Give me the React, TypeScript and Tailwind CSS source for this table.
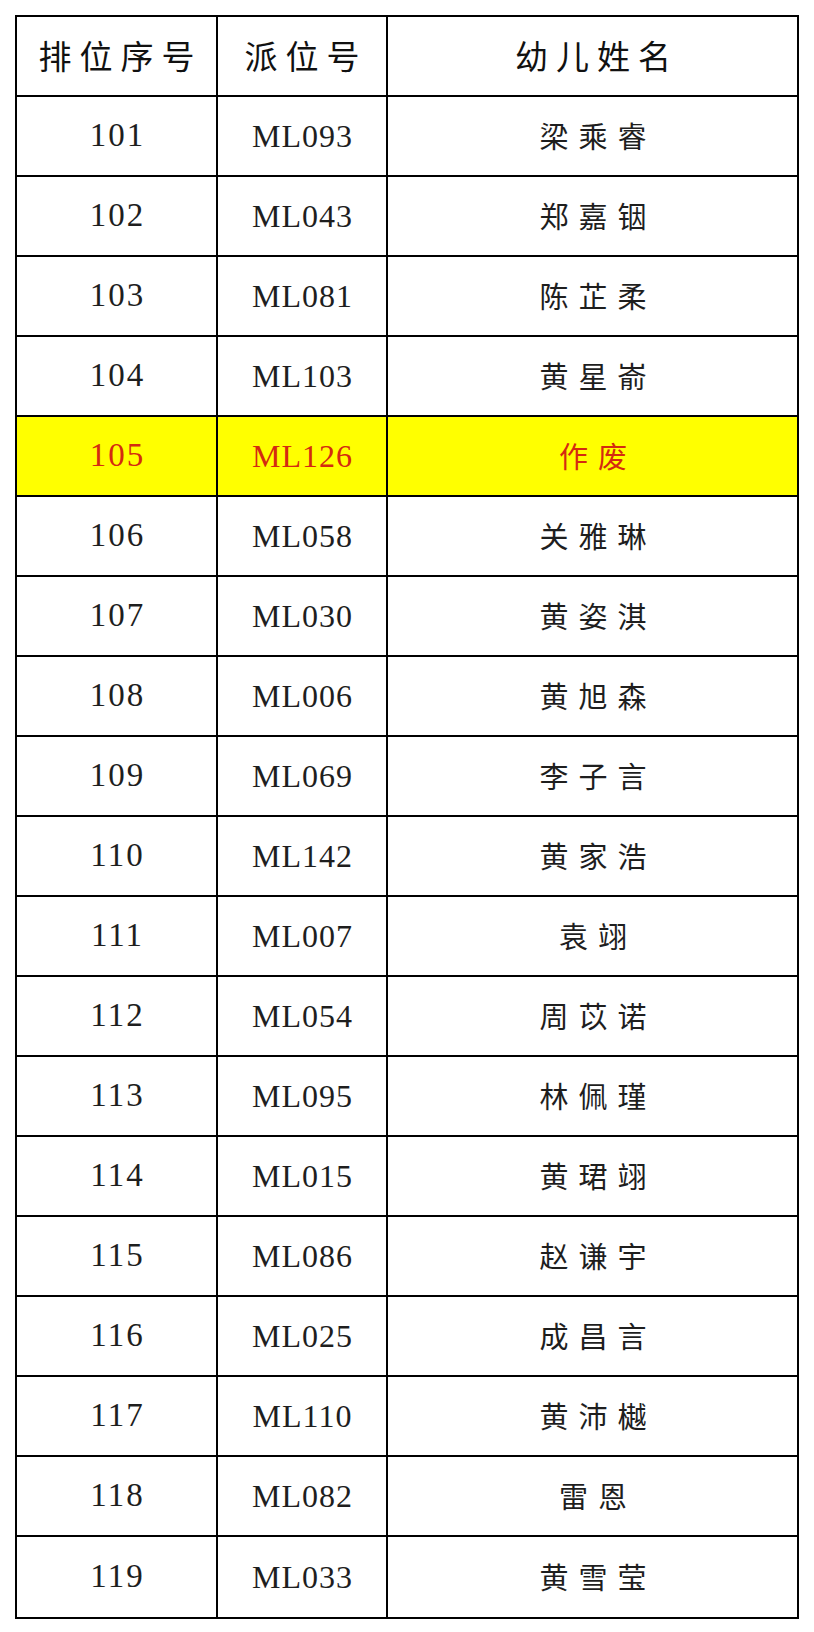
import React from "react";

const rows: [string, string, string][] = [
  ["101", "ML093", "梁乘睿"],
  ["102", "ML043", "郑嘉铟"],
  ["103", "ML081", "陈芷柔"],
  ["104", "ML103", "黄星嵛"],
  ["105", "ML126", "作废"],
  ["106", "ML058", "关雅琳"],
  ["107", "ML030", "黄姿淇"],
  ["108", "ML006", "黄旭森"],
  ["109", "ML069", "李子言"],
  ["110", "ML142", "黄家浩"],
  ["111", "ML007", "袁翊"],
  ["112", "ML054", "周苡诺"],
  ["113", "ML095", "林佩瑾"],
  ["114", "ML015", "黄珺翊"],
  ["115", "ML086", "赵谦宇"],
  ["116", "ML025", "成昌言"],
  ["117", "ML110", "黄沛樾"],
  ["118", "ML082", "雷恩"],
  ["119", "ML033", "黄雪莹"],
];

const cjk = "font-['Noto_Sans_CJK_SC',sans-serif]";
const num = "font-['Liberation_Serif','Noto_Sans_CJK_SC',serif]";

export default function App() {
  return (
    <div className="w-[814px] h-[1632px] bg-white pt-[15px] pl-[15px]">
      <div className="w-[784px] border-2 border-black">
        <div className="grid grid-cols-[201px_170px_410px] h-[80px] border-b-2 border-black text-[#111111]">
          <div className={`flex items-center justify-center border-r-2 border-black text-[33px] tracking-[8px] pl-[8px] ${cjk}`}>排位序号</div>
          <div className={`flex items-center justify-center border-r-2 border-black text-[33px] tracking-[8px] pl-[8px] ${cjk}`}>派位号</div>
          <div className={`flex items-center justify-center text-[33px] tracking-[8px] pl-[8px] ${cjk}`}>幼儿姓名</div>
        </div>
        {rows.map(([a, b, c], i) => {
          const hl = a === "105";
          return (
            <div
              key={a}
              className={`grid grid-cols-[201px_170px_410px] h-[80px] ${i < rows.length - 1 ? "border-b-2 border-black" : ""} ${hl ? "bg-[#ffff00] text-[#d42a10]" : "bg-white text-[#1e1e1e]"}`}
            >
              <div className={`flex items-center justify-center border-r-2 border-black text-[33px] tracking-[2px] pl-[2px] ${num}`}>{a}</div>
              <div className={`flex items-center justify-center border-r-2 border-black text-[32px] tracking-[1px] pl-[1px] ${num}`}>{b}</div>
              <div className={`flex items-center justify-center text-[29px] tracking-[10px] pl-[10px] ${cjk}`}>{c}</div>
            </div>
          );
        })}
      </div>
    </div>
  );
}
